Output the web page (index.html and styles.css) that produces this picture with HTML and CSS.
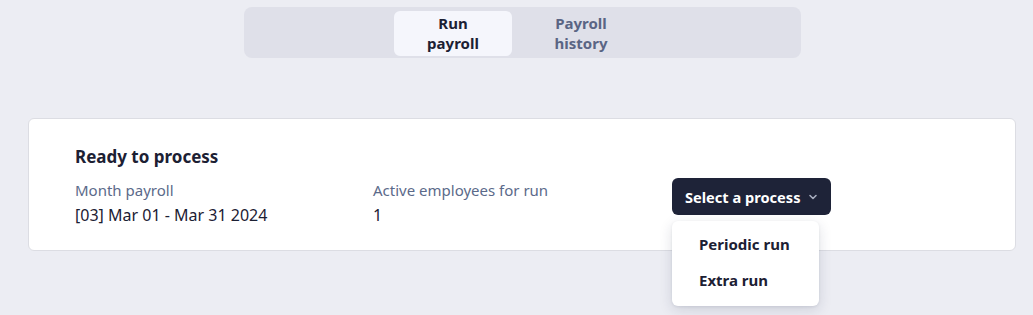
FILE: index.html
```html
<!DOCTYPE html>
<html lang="en">
<head>
  <meta charset="utf-8">
  <link rel="stylesheet" href="styles.css">
</head>
<body>
  <div class="tabs-wrap">
    <div class="tabs">
      <div class="tab active">Run<br>payroll</div>
      <div class="tab">Payroll<br>history</div>
    </div>
  </div>

  <div class="card">
    <h2 class="card-title">Ready to process</h2>
    <div class="card-grid">
      <div class="field">
        <div class="label">Month payroll</div>
        <div class="value">[03] Mar 01 - Mar 31 2024</div>
      </div>
      <div class="field">
        <div class="label">Active employees for run</div>
        <div class="value">1</div>
      </div>
      <div class="process">
        <button class="process-btn">Select a process
          <svg class="chevron" width="10" height="10" viewBox="0 0 10 10"><path d="M2 3.5 L5 6.5 L8 3.5" fill="none" stroke="#a6acbd" stroke-width="1.6" stroke-linecap="round" stroke-linejoin="round"/></svg>
        </button>
        <ul class="menu">
          <li>Periodic run</li>
          <li>Extra run</li>
        </ul>
      </div>
    </div>
  </div>
</body>
</html>
```

FILE: styles.css
```css
  html, body {
    min-height: 100%;
  }

  body {
    margin: 0;
    min-height: 315px;
    background-color: #ecedf3;
    font-family: "Noto Sans", "Open Sans", sans-serif;
    color: #1c2033;
  }

  .tabs-wrap {
    padding: 7px 232px 0 244px;
  }

  .tabs {
    display: flex;
    gap: 10px;
    height: 51px;
    box-sizing: border-box;
    padding: 4px 0 2px 150px;
    background-color: #dfe0e9;
    border-radius: 8px;
  }

  .tab {
    width: 118px;
    text-align: center;
    font-size: 15px;
    font-weight: 700;
    line-height: 20px;
    padding-top: 2px;
    color: #5a6584;
    border-radius: 6px;
  }

  .tab.active {
    background-color: #f5f6fc;
    color: #1c2033;
  }

  .card {
    margin: 60px 17px 0 28px;
    background-color: #fff;
    border: 1px solid #dcdde3;
    border-radius: 6px;
    padding: 27px 46px 20px 46px;
    height: 133px;
    box-sizing: border-box;
  }

  .card-title {
    margin: 0 0 10px 0;
    font-size: 17px;
    font-weight: 700;
    line-height: 22px;
  }

  .card-grid {
    display: grid;
    grid-template-columns: 1fr 1fr 1fr;
  }

  .label {
    font-size: 15px;
    line-height: 24px;
    color: #5b6a8a;
  }

  .value {
    font-size: 16px;
    line-height: 24px;
    padding-top: 1px;
    color: #1c2033;
  }

  .process {
    position: relative;
    padding-left: 1px;
  }

  .process-btn {
    display: flex;
    align-items: center;
    gap: 8px;
    height: 37px;
    padding: 0 13px 0 13px;
    background-color: #1e2338;
    color: #fff;
    border: none;
    border-radius: 6px;
    font-family: inherit;
    font-size: 14.6px;
    font-weight: 700;
  }

  .menu {
    position: absolute;
    top: 43px;
    left: 1px;
    width: 147px;
    margin: 0;
    padding: 5px 0 8px 0;
    list-style: none;
    background-color: #fff;
    border-radius: 6px;
    box-shadow: 0 4px 14px rgba(30, 35, 70, 0.14), 0 1px 3px rgba(30, 35, 70, 0.08);
  }

  .menu li {
    padding: 0 27px;
    font-size: 15px;
    font-weight: 700;
    line-height: 36px;
    color: #1c2033;
  }
```
